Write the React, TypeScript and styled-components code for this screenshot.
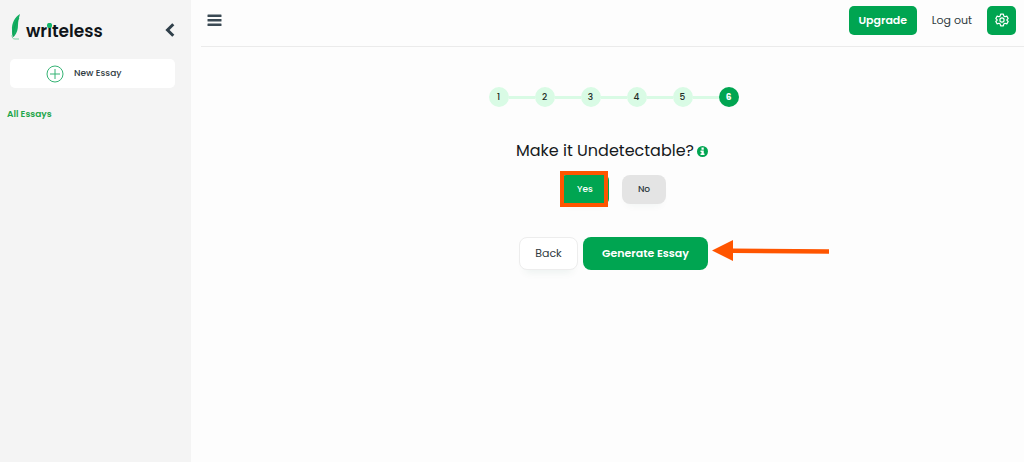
import React from "react";
import styled, { createGlobalStyle } from "styled-components";

const GlobalStyle = createGlobalStyle`
  * { box-sizing: border-box; }
  body {
    margin: 0;
    background: #fdfdfd;
    color: #2f3b42;
    font-family: Poppins, Inter, "Liberation Sans", sans-serif;
  }
  button { font-family: inherit; color: inherit; border: 0; padding: 0; cursor: pointer; }
  a { text-decoration: none; color: inherit; }
  svg { display: block; flex: none; }
`;

const Page = styled.div`
  display: flex;
  min-height: 100vh;
`;

const Sidebar = styled.aside`
  flex: none;
  width: 191px;
  background: #f4f4f4;
`;

const Brand = styled.div`
  display: flex;
  align-items: center;
  justify-content: space-between;
  height: 59px;
  padding: 0 16px 0 10px;
`;

const Logo = styled.a`
  display: flex;
  align-items: center;
  gap: 5px;
  padding-bottom: 6px;
`;

const Wordmark = styled.span`
  padding-top: 8px;
  font-size: 17px;
  line-height: 24px;
  font-weight: 600;
  color: #101418;
`;

const DottedI = styled.span`
  position: relative;
  &::after {
    content: "";
    position: absolute;
    left: 0;
    top: 4px;
    width: 5px;
    height: 5px;
    border-radius: 2px;
    background: #12b76a;
  }
`;

const IconButton = styled.button`
  display: flex;
  background: none;
`;

const NewEssay = styled.button`
  display: flex;
  align-items: center;
  gap: 10px;
  width: calc(100% - 26px);
  height: 29px;
  margin-left: 10px;
  padding-left: 36px;
  border-radius: 5px;
  background: #fff;
  font-size: 9px;
  font-weight: 500;
`;

const SideLink = styled.a`
  display: block;
  padding: 20px 7px;
  font-size: 9px;
  line-height: 13px;
  font-weight: 600;
  color: #1fa64a;
`;

const Main = styled.main`
  flex: 1;
  min-width: 0;
  padding-left: 10px;
`;

const TopBar = styled.header`
  display: flex;
  align-items: center;
  justify-content: space-between;
  height: 47px;
  padding: 0 8px 6px 6px;
  border-bottom: 1px solid #ebebeb;
`;

const Actions = styled.div`
  display: flex;
  align-items: center;
  gap: 15px;
  font-size: 11px;
`;

const GreenButton = styled.button<{ $width: number }>`
  display: flex;
  align-items: center;
  justify-content: center;
  width: ${(p) => p.$width}px;
  height: 29px;
  border-radius: 5px;
  background: #00a551;
  color: #fff;
  font-size: 11px;
  font-weight: 600;
`;

const Wizard = styled.section`
  display: flex;
  flex-direction: column;
  align-items: center;
  padding: 40px 0 0 2px;
`;

const Steps = styled.ol`
  display: flex;
  margin: 0;
  padding: 0;
  list-style: none;
`;

const Step = styled.li<{ $active: boolean }>`
  display: flex;
  align-items: center;
  font-size: 9px;
  font-weight: ${(p) => (p.$active ? 700 : 500)};
  color: ${(p) => (p.$active ? "#fff" : "#1f2d27")};

  span {
    width: 20px;
    line-height: 20px;
    border-radius: 10px;
    text-align: center;
    background: ${(p) => (p.$active ? "#00a551" : "#d9fbe5")};
  }
  &:not(:first-child)::before {
    content: "";
    width: 26px;
    height: 3px;
    background: #d9fbe5;
  }
`;

const Question = styled.h1`
  display: flex;
  align-items: center;
  gap: 3px;
  margin: 32px 0 12px;
  padding-right: 3px;
  font-size: 16px;
  line-height: 24px;
  font-weight: 400;
  color: #15191c;
`;

const Row = styled.div<{ $gap: number }>`
  position: relative;
  display: flex;
  gap: ${(p) => p.$gap}px;
`;

const Choice = styled.button<{ $selected?: boolean }>`
  position: relative;
  width: ${(p) => (p.$selected ? 48 : 44)}px;
  height: 29px;
  border-radius: ${(p) => (p.$selected ? 5 : 8)}px;
  background: ${(p) => (p.$selected ? "#00a551" : "#e4e4e4")};
  color: ${(p) => (p.$selected ? "#fff" : "#2f3b42")};
  font-size: 9px;
  font-weight: 500;
  box-shadow: 0 6px 8px -5px rgba(0, 90, 60, 0.06);
`;

const Highlight = styled.span`
  position: absolute;
  inset: -4px 1px -3px -1px;
  border: 4px solid #ff5500;
`;

const FooterRow = styled(Row)`
  margin-top: 33px;
`;

const Back = styled.button`
  width: 59px;
  height: 33px;
  border: 1px solid #ededed;
  border-radius: 8px;
  background: #fff;
  font-size: 11px;
  box-shadow: 0 8px 8px -6px rgba(0, 90, 60, 0.08);
`;

const Generate = styled(GreenButton)`
  height: 33px;
  border-radius: 8px;
`;

const Arrow = styled.svg`
  position: absolute;
  left: calc(100% + 4px);
  top: 3px;
`;

export default function App() {
  return (
    <>
      <GlobalStyle />
      <Page>
        <Sidebar>
          <Brand>
            <Logo href="#">
              <svg width="11" height="26" viewBox="0 0 11 26" aria-hidden="true">
                <path d="M10 0C5 3 1.500 9 2 16c0 3 0 5 1 7l1.500-1c2.500-3 3.500-7 3.500-11 0-4 1-7 2-11Z" fill="#14ae62" />
                <path d="M9 4C5 10 3 16 3 23" fill="none" stroke="#0b9c50" strokeWidth="0.7" />
                <path d="M2 21c0 3 1 4 3 4h4" fill="none" stroke="#7fd3a6" strokeWidth="1" />
              </svg>
              <Wordmark>
                wr<DottedI>i</DottedI>teless
              </Wordmark>
            </Logo>
            <IconButton aria-label="Collapse sidebar">
              <svg width="10" height="14" viewBox="0 0 10 14">
                <path d="M8.300 1.200L2.500 7l5.800 5.800" fill="none" stroke="#2f3f4a" strokeWidth="3" />
              </svg>
            </IconButton>
          </Brand>
          <NewEssay>
            <svg width="18" height="18" viewBox="0 0 18 18" fill="none" stroke="#35b374" strokeWidth="1">
              <circle cx="9" cy="9" r="8" />
              <path d="M9 4v10M4 9h10" />
            </svg>
            New Essay
          </NewEssay>
          <SideLink href="#">All Essays</SideLink>
        </Sidebar>
        <Main>
          <TopBar>
            <IconButton aria-label="Menu">
              <svg width="15" height="13" viewBox="0 0 15 13" fill="#3b4a54">
                <rect x="0.500" y="0.500" width="14" height="2.500" rx="0.500" />
                <rect x="0.500" y="5" width="14" height="2.500" rx="0.500" />
                <rect x="0.500" y="9.500" width="14" height="2.500" rx="0.500" />
              </svg>
            </IconButton>
            <Actions>
              <GreenButton $width={68}>Upgrade</GreenButton>
              <a href="#">Log out</a>
              <GreenButton $width={29} aria-label="Settings">
                <svg width="14" height="14" viewBox="0 0 24 24" fill="none" stroke="#fff" strokeWidth="2" strokeLinejoin="round">
                  <path d="M9.600 2h4.800l.7 3.200 2 1.200 3.200-1 2.300 4.100-2.400 2.300v.4l2.400 2.300-2.300 4.100-3.200-1-2 1.200-.7 3.200H9.600l-.7-3.200-2-1.200-3.200 1-2.300-4.100 2.400-2.300v-.4L1.400 9.500l2.300-4.100 3.200 1 2-1.200Z" />
                  <circle cx="12" cy="12" r="3.600" />
                </svg>
              </GreenButton>
            </Actions>
          </TopBar>
          <Wizard>
            <Steps>
              {[1, 2, 3, 4, 5, 6].map((n) => (
                <Step key={n} $active={n === 6}>
                  <span>{n}</span>
                </Step>
              ))}
            </Steps>
            <Question>
              Make it Undetectable?
              <svg width="11" height="11" viewBox="0 0 22 22" role="img" aria-label="More information">
                <circle cx="11" cy="11" r="11" fill="#00a551" />
                <path d="M9 3h4.500v4.500H9zM7 9h6.500v6H15v3H7v-3h2v-3H7Z" fill="#fff" />
              </svg>
            </Question>
            <Row $gap={13}>
              <Choice $selected>
                Yes
                <Highlight />
              </Choice>
              <Choice>No</Choice>
            </Row>
            <FooterRow $gap={5}>
              <Back>Back</Back>
              <Generate $width={125}>Generate Essay</Generate>
              <Arrow width="118" height="22" viewBox="0 0 118 22" fill="#ff5500" aria-hidden="true">
                <path d="M0 10.500L21 0v8.500l96 .7v4.500l-96-.7V21Z" />
              </Arrow>
            </FooterRow>
          </Wizard>
        </Main>
      </Page>
    </>
  );
}
